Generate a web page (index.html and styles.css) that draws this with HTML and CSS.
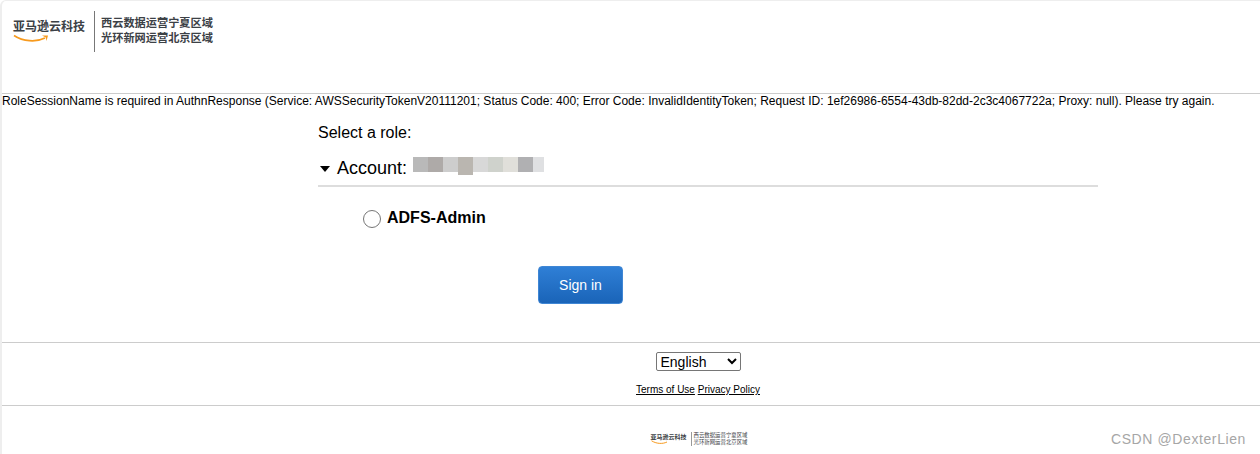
FILE: index.html
```html
<!DOCTYPE html>
<html lang="en">
<head>
  <meta charset="UTF-8">
  <title>Amazon Web Services Sign-In</title>
  <link rel="stylesheet" href="styles.css">
</head>
<body>
  <div class="page">
    <div class="header">
      <div class="logo">
        <div class="logo-brand">
          <span class="brand-name">亚马逊云科技</span>
          <svg class="smile" viewBox="0 0 36 10" width="36" height="10">
            <path d="M1 1.5C10 7.5 23 8.500 32 4" fill="none" stroke="#f79a1e" stroke-width="1.700"/>
            <path d="M29 1.500L35 1.500L33.500 7L32.800 3.600Z" fill="#f79a1e"/>
          </svg>
        </div>
        <div class="logo-regions">
          <span>西云数据运营宁夏区域</span>
          <span>光环新网运营北京区域</span>
        </div>
      </div>
    </div>

    <div class="error">RoleSessionName is required in AuthnResponse (Service: AWSSecurityTokenV20111201; Status Code: 400; Error Code: InvalidIdentityToken; Request ID: 1ef26986-6554-43db-82dd-2c3c4067722a; Proxy: null). Please try again.</div>

    <div class="content">
      <div class="select-title">Select a role:</div>
      <div class="account">
        <span class="arrow"></span>
        <span class="account-label">Account:</span>
        <span class="mosaic">
          <i class="m1"></i><i class="m2"></i><i class="m3"></i><i class="m4"></i><i class="m5"></i><i class="m6"></i><i class="m7"></i><i class="m8"></i><i class="m9"></i>
        </span>
      </div>
      <label class="role">
        <span class="radio"></span>
        <span class="role-name">ADFS-Admin</span>
      </label>
      <div class="actions">
        <button class="signin">Sign in</button>
      </div>
    </div>

    <div class="footer">
      <select class="lang">
        <option>English</option>
      </select>
      <div class="links"><a>Terms of Use</a> <a>Privacy Policy</a></div>
    </div>

    <div class="bottom">
      <div class="logo-small">
        <div class="small-brand">
          <span>亚马逊云科技</span>
          <svg class="smile-small" viewBox="0 0 36 10" width="18" height="5">
            <path d="M1 1.500C10 7.500 23 8.500 32 4" fill="none" stroke="#f79a1e" stroke-width="2"/>
          </svg>
        </div>
        <div class="small-regions">
          <span>西云数据运营宁夏区域</span>
          <span>光环新网运营北京区域</span>
        </div>
      </div>
    </div>
  </div>
  <div class="watermark">CSDN @DexterLien</div>
</body>
</html>
```

FILE: styles.css
```css
html, body {
  margin: 0;
  padding: 0;
  background: #fff;
}
body {
  height: 454px;
  overflow: hidden;
  font-family: "Liberation Sans", "Noto Sans CJK SC", Arial, sans-serif;
  color: #000;
}
.page {
  height: 454px;
  box-sizing: border-box;
  border-left: 2px solid #eeeeee;
  border-top: 1px solid #eeeeee;
  border-top-left-radius: 6px;
}
.header {
  height: 92px;
  border-bottom: 1px solid #cccccc;
  box-sizing: content-box;
  padding-left: 11px;
}
.logo {
  display: flex;
  padding-top: 10px;
}
.logo-brand {
  width: 82px;
  padding-top: 8px;
  box-sizing: border-box;
  border-right: 1px solid #777;
  height: 41px;
  margin-right: 6px;
}
.brand-name {
  display: block;
  font-size: 12px;
  line-height: 16px;
  font-weight: 700;
  color: #3c4146;
}
.smile {
  display: block;
  margin-top: -1px;
}
.logo-regions {
  display: flex;
  flex-direction: column;
  padding-top: 4px;
  font-size: 11.200px;
  line-height: 16px;
  font-weight: 700;
  color: #3c4146;
}
.logo-regions span + span {
  margin-top: -1px;
}
.error {
  font-size: 12px;
  line-height: 14px;
  white-space: nowrap;
}
.content {
  margin-left: 316px;
  width: 780px;
  padding-top: 16px;
}
.select-title {
  font-size: 16px;
  line-height: 18px;
}
.account {
  display: flex;
  align-items: center;
  box-sizing: border-box;
  height: 38px;
  margin-top: 7px;
  border-bottom: 2px solid #dddddd;
  padding-top: 3px;
}
.arrow {
  width: 0;
  height: 0;
  border-left: 5.500px solid transparent;
  border-right: 5.500px solid transparent;
  border-top: 6px solid #000;
  margin: 1px 7px 0 2px;
}
.account-label {
  font-size: 18px;
}
.mosaic {
  display: flex;
  margin-left: 6px;
  margin-top: -9px;
  height: 15px;
}
.mosaic i {
  display: block;
  width: 15px;
  height: 15px;
}
.mosaic .m1 { background: #b9b9b9; }
.mosaic .m2 { background: #aeaaa8; }
.mosaic .m3 { background: #cdcdcd; }
.mosaic .m4 { background: #bab6b0; height: 18px; }
.mosaic .m5 { background: #d8d8d8; }
.mosaic .m6 { background: #cfd2cc; }
.mosaic .m7 { background: #e0dfda; }
.mosaic .m8 { background: #b0b0b2; }
.mosaic .m9 { background: #dfe0e2; width: 11px; }
.role {
  display: flex;
  align-items: center;
  margin: 21px 0 0 45px;
}
.radio {
  width: 16px;
  height: 16px;
  border: 1px solid #767676;
  border-radius: 50%;
  margin-top: 2px;
  margin-right: 6px;
}
.role-name {
  font-size: 16px;
  font-weight: 700;
  line-height: 20px;
}
.actions {
  margin: 38px 0 0 220px;
}
.signin {
  display: block;
  width: 85px;
  height: 38px;
  border: 1px solid #3f86d4;
  border-radius: 4px;
  background: linear-gradient(#2f7fd6, #1a64b8);
  color: #fff;
  font-family: inherit;
  font-size: 14px;
  padding: 0;
}
.footer {
  margin-top: 38px;
  height: 62px;
  border-top: 1px solid #cccccc;
  border-bottom: 1px solid #cccccc;
  padding-left: 134px;
  text-align: center;
}
.lang {
  display: block;
  margin: 9px auto 0;
  width: 85px;
  height: 19px;
  font-family: inherit;
  font-size: 14px;
  background: #fff;
  border: 1px solid #767676;
  border-radius: 2px;
  padding: 0;
}
.links {
  margin-top: 13px;
  font-size: 10px;
  line-height: 12px;
}
.links a {
  text-decoration: underline;
}
.bottom {
  padding: 26px 0 0 136px;
  display: flex;
  justify-content: center;
}
.logo-small {
  display: flex;
}
.small-brand {
  width: 41px;
  height: 14px;
  padding-top: 2px;
  box-sizing: border-box;
  border-right: 1px solid #999;
  margin-right: 2px;
}
.small-brand span {
  display: block;
  font-size: 6px;
  line-height: 7px;
  font-weight: 700;
  color: #3c4146;
}
.smile-small {
  display: block;
  margin-top: -1px;
}
.small-regions {
  display: flex;
  flex-direction: column;
  font-size: 5.400px;
  line-height: 7px;
  color: #3c4146;
}
.watermark {
  position: absolute;
  right: 14px;
  top: 430px;
  font-size: 14px;
  line-height: 18px;
  color: #a6a6a6;
  letter-spacing: 0.600px;
}
```
